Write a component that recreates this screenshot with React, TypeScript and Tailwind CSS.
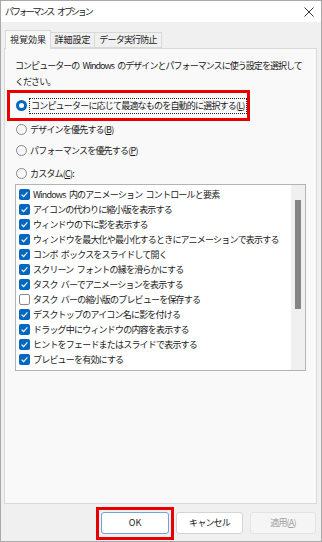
import React from "react";

const items: { label: string; checked: boolean }[] = [
  { label: "Windows 内のアニメーション コントロールと要素", checked: true },
  { label: "アイコンの代わりに縮小版を表示する", checked: true },
  { label: "ウィンドウの下に影を表示する", checked: true },
  { label: "ウィンドウを最大化や最小化するときにアニメーションで表示する", checked: true },
  { label: "コンボ ボックスをスライドして開く", checked: true },
  { label: "スクリーン フォントの縁を滑らかにする", checked: true },
  { label: "タスク バーでアニメーションを表示する", checked: true },
  { label: "タスク バーの縮小版のプレビューを保存する", checked: false },
  { label: "デスクトップのアイコン名に影を付ける", checked: true },
  { label: "ドラッグ中にウィンドウの内容を表示する", checked: true },
  { label: "ヒントをフェードまたはスライドで表示する", checked: true },
  { label: "プレビューを有効にする", checked: true },
];

function Radio({ selected }: { selected?: boolean }) {
  if (selected) {
    return (
      <span className="flex h-[11px] w-[11px] shrink-0 items-center justify-center rounded-full bg-[#0067c0]">
        <span className="h-[5px] w-[5px] rounded-full bg-white" />
      </span>
    );
  }
  return <span className="h-[11px] w-[11px] shrink-0 rounded-full border border-[#8a8a8a] bg-[#f7f7f7]" />;
}

function Check({ checked }: { checked: boolean }) {
  if (!checked) {
    return <span className="h-[11px] w-[11px] shrink-0 rounded-[2px] border border-[#8a8a8a] bg-white" />;
  }
  return (
    <span className="flex h-[11px] w-[11px] shrink-0 items-center justify-center rounded-[2px] bg-[#0067c0]">
      <svg width="11" height="11" viewBox="0 0 11 11">
        <path d="M2.6 5.6 L4.6 7.6 L8.4 3.4" fill="none" stroke="white" strokeWidth="1.2" />
      </svg>
    </span>
  );
}

export default function App() {
  return (
    <div className="flex h-[542px] w-[322px] flex-col overflow-hidden whitespace-nowrap border border-[#a9a9a9] bg-[#f0f0f0] text-[9px] tracking-[-0.8px] text-[#1a1a1a] [word-spacing:2px] [font-family:'Noto_Sans_CJK_JP','Noto_Sans',sans-serif] font-features-['palt']">
      {/* title bar */}
      <div className="flex h-[21px] shrink-0 items-center justify-between bg-white pl-[4px] pr-[7px]">
        <span className="leading-none tracking-[-2.1px] [word-spacing:4px]">パフォーマンス オプション</span>
        <svg width="10" height="10" viewBox="0 0 10 10">
          <path d="M0.5 0.5 L9.5 9.5 M9.5 0.5 L0.5 9.5" stroke="#333" strokeWidth="1" />
        </svg>
      </div>

      {/* tabs */}
      <div className="flex h-[26px] shrink-0 items-end pl-[4px]">
        <div className="relative z-10 -mb-px flex h-[19px] w-[46px] items-center justify-center border border-b-0 border-[#d9d9d9] bg-[#f9f9f9] tracking-normal">
          視覚効果
        </div>
        <div className="flex h-[16px] w-[44px] items-center justify-center border border-l-0 border-[#d9d9d9] bg-[#f0f0f0] tracking-normal">
          詳細設定
        </div>
        <div className="flex h-[16px] w-[67px] items-center justify-center border border-l-0 border-[#d9d9d9] bg-[#f0f0f0]">
          データ実行防止
        </div>
      </div>

      {/* panel */}
      <div className="ml-[3px] flex h-[456px] w-[313px] shrink-0 flex-col border border-[#d9d9d9] bg-[#f9f9f9] px-[10px] pt-[9px]">
        <p className="leading-[16px] tracking-[-0.95px]">
          コンピューターの Windows のデザインとパフォーマンスに使う設定を選択して
          <br />
          ください。
        </p>

        <div className="-ml-[8px] flex h-[31px] w-[243px] items-center gap-[2px] border-[3px] border-[#e60000] pl-[6px]">
          <Radio selected />
          <span className="flex h-[16px] items-center border border-dotted border-[#222] px-[1px] leading-none">
            コンピューターに応じて最適なものを自動的に選択する(<span className="underline">L</span>)
          </span>
        </div>

        <div className="flex h-[16px] items-center gap-[3px] pl-[1px]">
          <Radio />
          <span className="leading-none">デザインを優先する(<span className="underline">B</span>)</span>
        </div>
        <div className="mt-[5px] flex h-[16px] items-center gap-[3px] pl-[1px]">
          <Radio />
          <span className="leading-none">パフォーマンスを優先する(<span className="underline">P</span>)</span>
        </div>
        <div className="mt-[7px] flex h-[16px] items-center gap-[3px] pl-[1px]">
          <Radio />
          <span className="leading-none">カスタム(<span className="underline">C</span>):</span>
        </div>

        <div className="mt-[3px] flex h-[187px] w-[291px] border border-[#b4b4b4] bg-white">
          <div className="flex min-w-0 flex-1 flex-col overflow-hidden pt-[2px]">
            {items.map((it) => (
              <div key={it.label} className="flex h-[15px] items-center gap-[3px] pl-[3px]">
                <Check checked={it.checked} />
                <span className="leading-none">{it.label}</span>
              </div>
            ))}
          </div>
          <div className="w-[14px] shrink-0 bg-[#f0f0f0] pl-[4px] pt-[15px]">
            <div className="h-[109px] w-[6px] bg-[#858585]" />
          </div>
        </div>
      </div>

      {/* buttons */}
      <div className="flex flex-1 items-start justify-end pr-[5px] pt-[3px]">
        <div className="border-[3px] border-[#e60000] px-[2px] pb-[3px] pt-[2px]">
          <div className="flex h-[22px] w-[68px] items-center justify-center rounded-[3px] border border-[#6fa3dc] bg-white tracking-normal">
            OK
          </div>
        </div>
        <div className="ml-[2px] mt-[5px] flex h-[22px] w-[67px] items-center justify-center rounded-[3px] border border-[#d4d4d4] bg-white">
          キャンセル
        </div>
        <div className="ml-[7px] mt-[5px] flex h-[22px] w-[66px] items-center justify-center rounded-[3px] border border-[#e3e3e3] bg-[#f5f5f5] text-[#a0a0a0]">
          適用(<span className="underline">A</span>)
        </div>
      </div>
    </div>
  );
}
